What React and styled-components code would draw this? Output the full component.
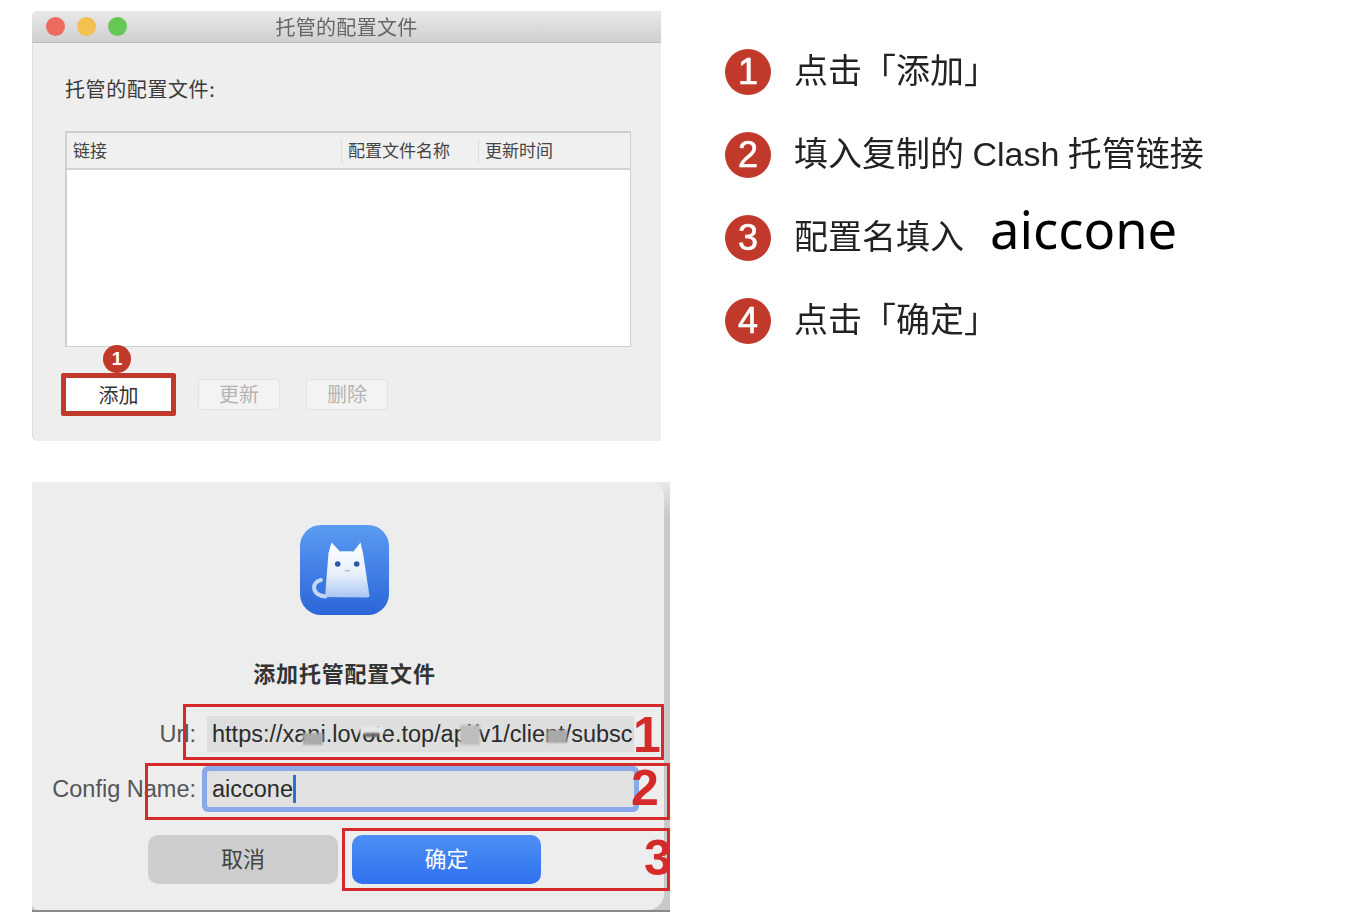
import React from 'react'
import styled, { createGlobalStyle } from 'styled-components'

const CJK = `"Noto Sans CJK SC", "Noto Sans", sans-serif`
const LATIN = `"Liberation Sans", "Noto Sans CJK SC", sans-serif`

const GlobalStyle = createGlobalStyle`
  html, body {
    margin: 0;
    background: #fff;
    font-family: ${CJK};
  }
`

const Page = styled.div`
  width: 1368px;
  height: 924px;
  box-sizing: border-box;
  padding: 11px 0 0 32px;
  display: flex;
  overflow: hidden;
`

const LeftColumn = styled.div`
  width: 693px;
  display: flex;
  flex-direction: column;
  gap: 41px;
  flex-shrink: 0;
  filter: blur(0.4px);
`

/* top window */
const PrefsWindow = styled.div`
  width: 629px;
  height: 430px;
  background: #eee;
  border-radius: 6px 0 0 6px;
  box-shadow: inset 1px 0 0 #ddd;
  display: flex;
  flex-direction: column;
  position: relative;
`

const TitleBar = styled.div`
  height: 32px;
  flex-shrink: 0;
  box-sizing: border-box;
  padding-left: 14px;
  display: flex;
  align-items: center;
  gap: 12px;
  position: relative;
  background: linear-gradient(#e9e9e9, #cfcfcf);
  border-bottom: 1px solid #bdbdbd;
  border-radius: 5px 0 0 0;
`

const Light = styled.span`
  width: 19px;
  height: 19px;
  border-radius: 50%;
  background: ${p => p.$color};
`

const WindowTitle = styled.div`
  position: absolute;
  left: 0;
  right: 0;
  text-align: center;
  font-size: 20px;
  letter-spacing: 0.3px;
  line-height: 32px;
  color: #666;
`

const PrefsBody = styled.div`
  flex: 1;
  padding: 31px 30px 0 33px;
`

const PrefsLabel = styled.div`
  font-size: 20px;
  letter-spacing: 0.6px;
  line-height: 30px;
  color: #3a3a3a;
  margin-bottom: 27px;
`

const Table = styled.div`
  width: 566px;
  height: 216px;
  box-sizing: border-box;
  border: 2px solid #cfcfcf;
  border-right-width: 1px;
  border-bottom-width: 1px;
  background: #fff;
`

const TableHead = styled.div`
  height: 35px;
  display: grid;
  grid-template-columns: 274px 137px 1fr;
  align-items: center;
  background: #f0f0f0;
  border-bottom: 2px solid #d4d4d4;
`

const HeadCell = styled.div`
  height: 24px;
  padding-left: 6px;
  font-size: 17px;
  line-height: 22px;
  color: #444;
  border-left: ${p => (p.$first ? 'none' : '1px solid #ddd')};
`

const ButtonRow = styled.div`
  position: relative;
  margin: 26px 0 0 -4px;
  display: flex;
  align-items: center;
  gap: 22px;
`

const AddHighlight = styled.div`
  width: 115px;
  height: 43px;
  box-sizing: border-box;
  border: 5px solid #c0392b;
  border-radius: 2px;
  background: #fff;
  font-size: 20px;
  line-height: 33px;
  text-align: center;
  color: #333;
`

const GhostButton = styled.div`
  width: 82px;
  height: 31px;
  box-sizing: border-box;
  margin-right: 4px;
  background: #f3f3f3;
  border: 1px solid #e2e2e2;
  border-radius: 4px;
  font-size: 20px;
  line-height: 28px;
  text-align: center;
  color: #b4b4b4;
`

const Badge = styled.div`
  width: ${p => p.$size}px;
  height: ${p => p.$size}px;
  flex-shrink: 0;
  border-radius: 50%;
  background: #c0392b;
  color: #fff;
  font-family: ${LATIN};
  font-size: ${p => p.$font}px;
  line-height: ${p => p.$size}px;
  text-align: center;
`

const AddBadge = styled(Badge)`
  position: absolute;
  left: 42px;
  top: -28px;
  font-weight: bold;
`

/* bottom window */
const SheetFrame = styled.div`
  width: 638px;
  height: 430px;
  background: linear-gradient(#e8e8e8, #c9c9c9 8%);
  border-bottom: 2px solid #8a8a8a;
  box-sizing: border-box;
  position: relative;
`

const Sheet = styled.div`
  width: 632px;
  height: 428px;
  background: #ededee;
  border-radius: 0 14px 16px 6px;
  display: flex;
  flex-direction: column;
  padding-top: 43px;
  box-sizing: border-box;
`

const SheetHeader = styled.div`
  width: 625px;
  display: flex;
  flex-direction: column;
  align-items: center;
`

const AppIcon = styled.svg`
  width: 89px;
  height: 90px;
  display: block;
`

const SheetTitle = styled.div`
  margin-top: 42px;
  font-size: 22px;
  line-height: 30px;
  font-weight: 700;
  color: #333;
  letter-spacing: 0.8px;
`

const Form = styled.div`
  margin-top: 29px;
  display: grid;
  grid-template-columns: 164px 427px;
  column-gap: 11px;
  row-gap: 19px;
  align-items: center;
`

const FieldLabel = styled.div`
  text-align: right;
  font-family: ${LATIN};
  font-size: 23.5px;
  color: #555;
`

const Field = styled.div`
  height: 36px;
  box-sizing: border-box;
  padding-left: 5px;
  background: #dedede;
  font-family: ${LATIN};
  font-size: 23.5px;
  line-height: 36px;
  color: #2b2b2b;
  white-space: nowrap;
  overflow: hidden;
  position: relative;
  display: flex;
  align-items: center;
  ${p => p.$focused && `
    background: #e1e1e2;
    overflow: visible;
    border-radius: 2px;
    box-shadow: 0 0 0 5px #8aa8ea;
  `}
`

const Patch = styled.span`
  position: absolute;
  left: ${p => p.$x}px;
  top: ${p => p.$y}px;
  width: ${p => p.$w}px;
  height: ${p => p.$h}px;
  background: ${p => p.$color};
  filter: blur(1px);
`

const Caret = styled.span`
  width: 3px;
  height: 28px;
  background: #2f6fdc;
  flex-shrink: 0;
`

const Actions = styled.div`
  margin: 28px 0 0 116px;
  display: flex;
  gap: 14px;
`

const ActionButton = styled.div`
  width: ${p => (p.$primary ? 189 : 190)}px;
  height: 49px;
  border-radius: 10px;
  font-size: 22px;
  line-height: 44px;
  text-align: center;
  background: ${p => (p.$primary ? 'linear-gradient(#4c8ff6, #2f72ee)' : '#cdcdcd')};
  color: ${p => (p.$primary ? '#fff' : '#444')};
`

const RedFrame = styled.div`
  position: absolute;
  left: ${p => p.$x}px;
  top: ${p => p.$y}px;
  width: ${p => p.$w}px;
  height: ${p => p.$h}px;
  box-sizing: border-box;
  border: 3px solid #d42a2a;
`

const RedNumber = styled.div`
  position: absolute;
  left: ${p => p.$x}px;
  top: ${p => p.$y}px;
  width: ${p => p.$w}px;
  overflow: hidden;
  font-family: ${LATIN};
  font-size: 50px;
  line-height: 50px;
  font-weight: bold;
  color: #d42a2a;
`

/* steps on the right */
const Steps = styled.div`
  padding: 19px 0 0 0;
  display: flex;
  flex-direction: column;
`

const Step = styled.div`
  height: 83px;
  display: flex;
  align-items: center;
  gap: 23px;
  font-size: 34px;
  color: #222;
  white-space: nowrap;
`

const StepBadge = styled(Badge)`
  filter: blur(0.4px);
  -webkit-text-stroke: 0.6px #fff;
`

const StepText = styled.span`
  position: relative;
  top: -3px;
  font-family: "Liberation Sans", "Noto Sans CJK SC", sans-serif;
  text-spacing-trim: space-all;
  word-spacing: -1px;
  filter: blur(0.4px);
`

const Aiccone = styled.span`
  margin-left: 3px;
  font-family: "Noto Sans", sans-serif;
  font-size: 52.5px;
  line-height: 50px;
  color: #000;
  position: relative;
  top: -9px;
`

const patches = [
  { x: 96, y: 17, w: 20, h: 12, color: '#a9a9a9' },
  { x: 153, y: 10, w: 24, h: 8, color: '#e6e6e6' },
  { x: 158, y: 17, w: 14, h: 4, color: '#666' },
  { x: 253, y: 9, w: 20, h: 20, color: '#bdbdbd' },
  { x: 340, y: 14, w: 20, h: 13, color: '#a9a9a9' },
]

const CatIcon = () => (
  <AppIcon viewBox="0 0 89 90">
    <defs>
      <linearGradient id="tile" x1="0" y1="0" x2="0" y2="1">
        <stop offset="0" stopColor="#5a9bf3" />
        <stop offset="1" stopColor="#2a66d8" />
      </linearGradient>
      <linearGradient id="cat" x1="0" y1="0" x2="0" y2="1">
        <stop offset="0" stopColor="#ffffff" />
        <stop offset="0.6" stopColor="#e6eefb" />
        <stop offset="1" stopColor="#a9c6f2" />
      </linearGradient>
    </defs>
    <rect width="89" height="90" rx="21" fill="url(#tile)" />
    <path d="M21 55c-5 1-8 5-6.500 10 1.500 4 6 6 11 6.500" fill="none" stroke="#c3d8f6" strokeWidth="4" strokeLinecap="round" />
    <path d="M25 72 28.500 28 31.500 17.500 40 26.500C44 26 49 26 53.500 26.500L60.500 17.500 63 28 69.500 71C69.500 72 68 72.500 66 72.500Z" fill="url(#cat)" />
    <circle cx="37.700" cy="39" r="2.800" fill="#2d5aa8" />
    <circle cx="56.700" cy="39" r="2.800" fill="#2d5aa8" />
    <path d="M45 45.500c1 .6 1.600.6 2.400-.5.800 1.100 1.500 1.100 2.400.5" fill="none" stroke="#6f86ad" strokeWidth="0.800" />
  </AppIcon>
)

const App = () => (
  <Page>
    <GlobalStyle />
    <LeftColumn>
      <PrefsWindow>
        <TitleBar>
          <WindowTitle>托管的配置文件</WindowTitle>
          <Light $color="#ec6a5e" />
          <Light $color="#f4c04f" />
          <Light $color="#65c854" />
        </TitleBar>
        <PrefsBody>
          <PrefsLabel>托管的配置文件:</PrefsLabel>
          <Table>
            <TableHead>
              <HeadCell $first>链接</HeadCell>
              <HeadCell>配置文件名称</HeadCell>
              <HeadCell>更新时间</HeadCell>
            </TableHead>
          </Table>
          <ButtonRow>
            <AddBadge $size={28} $font={19}>1</AddBadge>
            <AddHighlight>添加</AddHighlight>
            <GhostButton>更新</GhostButton>
            <GhostButton>删除</GhostButton>
          </ButtonRow>
        </PrefsBody>
      </PrefsWindow>

      <SheetFrame>
        <Sheet>
          <SheetHeader>
            <CatIcon />
            <SheetTitle>添加托管配置文件</SheetTitle>
          </SheetHeader>
          <Form>
            <FieldLabel>Url:</FieldLabel>
            <Field>
              https://xani.lovote.top/api/v1/client/subscribe
              {patches.map(patch => (
                <Patch key={patch.x + patch.color} $x={patch.x} $y={patch.y} $w={patch.w} $h={patch.h} $color={patch.color} />
              ))}
            </Field>
            <FieldLabel>Config Name:</FieldLabel>
            <Field $focused>aiccone<Caret /></Field>
          </Form>
          <Actions>
            <ActionButton>取消</ActionButton>
            <ActionButton $primary>确定</ActionButton>
          </Actions>
        </Sheet>
        <RedFrame $x={151} $y={222} $w={481} $h={56} />
        <RedFrame $x={113} $y={281} $w={525} $h={57} />
        <RedFrame $x={310} $y={346} $w={328} $h={63} />
        <RedNumber $x={601} $y={228} $w={30}>1</RedNumber>
        <RedNumber $x={599} $y={281} $w={30}>2</RedNumber>
        <RedNumber $x={612} $y={351} $w={26}>3</RedNumber>
      </SheetFrame>
    </LeftColumn>

    <Steps>
      <Step><StepBadge $size={46} $font={36}>1</StepBadge><StepText>点击「添加」</StepText></Step>
      <Step><StepBadge $size={46} $font={36}>2</StepBadge><StepText>填入复制的 Clash 托管链接</StepText></Step>
      <Step><StepBadge $size={46} $font={36}>3</StepBadge><StepText>配置名填入</StepText><Aiccone>aiccone</Aiccone></Step>
      <Step><StepBadge $size={46} $font={36}>4</StepBadge><StepText>点击「确定」</StepText></Step>
    </Steps>
  </Page>
)

export default App
